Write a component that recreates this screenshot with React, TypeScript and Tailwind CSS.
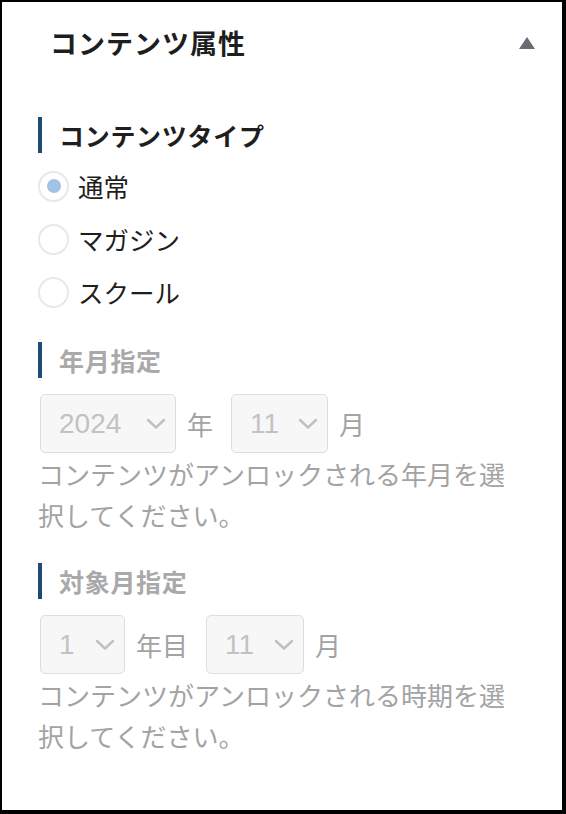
import React from "react";

const Chevron = () => (
  <svg width="20" height="12" viewBox="0 0 20 12" fill="none">
    <polyline points="2,2 10,9.5 18,2" stroke="#c0c0c0" strokeWidth="2.4" strokeLinecap="round" strokeLinejoin="round" />
  </svg>
);

const Select = ({ value, w }: { value: string; w: string }) => (
  <div
    className={`${w} ml-[2px] h-[59px] flex items-center justify-between pl-[18px] pr-[9px] rounded-[5px] border border-[#dedede] bg-[#f7f7f7] text-[28px] text-[#c2c2c2]`}
    style={{ fontFamily: '"Liberation Sans", Arial, sans-serif' }}
  >
    <span>{value}</span>
    <Chevron />
  </div>
);

const Heading = ({ text, muted }: { text: string; muted?: boolean }) => (
  <div className="flex items-center h-[36px] border-l-4 border-[#1f4b73] pl-[17px]">
    <span className={`text-[25px] font-bold leading-none tracking-[0.7px] ${muted ? "text-[#a9a9a9]" : "text-[#1e1e1e]"}`}>{text}</span>
  </div>
);

const Radio = ({ label, checked }: { label: string; checked?: boolean }) => (
  <div className="flex items-center h-[30px] gap-[9px]">
    <div className="w-[31px] h-[31px] rounded-full border-2 border-[#e8e8e8] bg-white flex items-center justify-center">
      {checked && <div className="w-[14px] h-[14px] rounded-full bg-[#a0c3e6]" />}
    </div>
    <span className="text-[25.5px] leading-none text-[#1e1e1e]">{label}</span>
  </div>
);

export default function App() {
  return (
    <div
      className="w-[566px] h-[814px] bg-white border-l-2 border-t-2 border-r-4 border-b-4 border-black overflow-hidden"
      style={{ fontFamily: '"Noto Sans CJK JP", "Noto Sans", sans-serif' }}
    >
      <div className="flex items-center justify-between pl-[48px] pr-[27px] pt-[22px] h-[60px]">
        <span className="text-[27px] font-bold leading-[38px] text-[#1e1e1e] tracking-[1px]">コンテンツ属性</span>
        <svg width="16" height="12" viewBox="0 0 16 12">
          <polygon points="8,0 16,12 0,12" fill="#6b6b73" />
        </svg>
      </div>

      <div className="pl-[36px] pt-[55px]">
        <Heading text="コンテンツタイプ" />
        <div className="flex flex-col gap-[23px] mt-[18px]">
          <Radio label="通常" checked />
          <Radio label="マガジン" />
          <Radio label="スクール" />
        </div>

        <div className="mt-[35px]">
          <Heading text="年月指定" muted />
        </div>
        <div className="flex items-center mt-[16px] text-[26px] text-[#a3a3a3]">
          <Select value="2024" w="w-[136px]" />
          <span className="ml-[11px] mr-[16px] leading-none">年</span>
          <Select value="11" w="w-[97px]" />
          <span className="ml-[11px] leading-none">月</span>
        </div>
        <p className="w-[480px] text-[26px] leading-[41px] text-[#a3a3a3]">
          コンテンツがアンロックされる年月を選択してください。
        </p>

        <div className="mt-[28px]">
          <Heading text="対象月指定" muted />
        </div>
        <div className="flex items-center mt-[16px] text-[26px] text-[#a3a3a3]">
          <Select value="1" w="w-[85px]" />
          <span className="ml-[11px] mr-[16px] leading-none">年目</span>
          <Select value="11" w="w-[98px]" />
          <span className="ml-[11px] leading-none">月</span>
        </div>
        <p className="w-[480px] text-[26px] leading-[41px] text-[#a3a3a3]">
          コンテンツがアンロックされる時期を選択してください。
        </p>
      </div>
    </div>
  );
}
